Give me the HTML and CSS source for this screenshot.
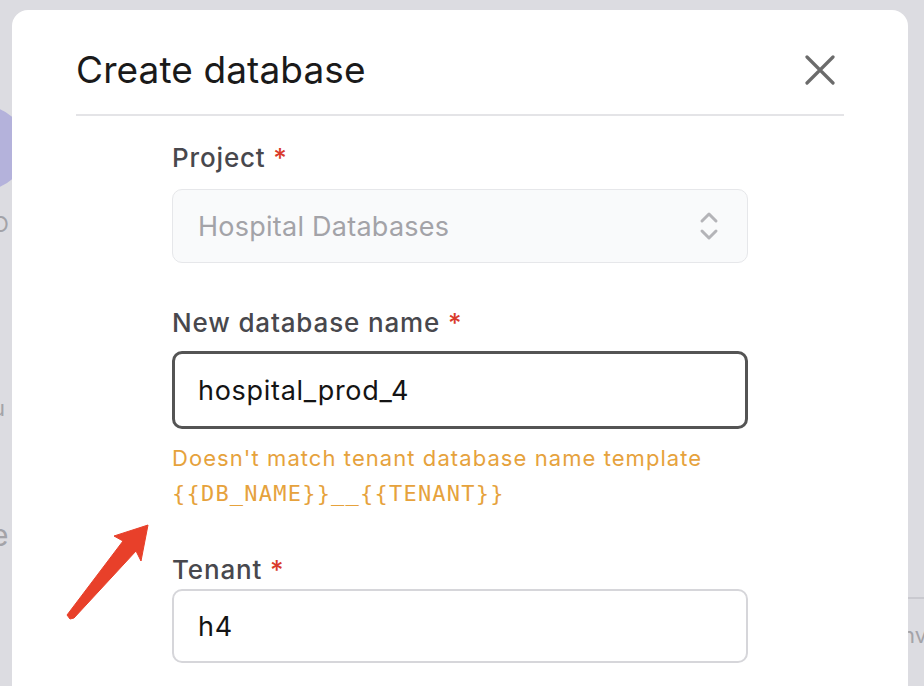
FILE: index.html
```html
<!DOCTYPE html>
<html lang="en">
<head>
<meta charset="utf-8">
<title>Create database</title>
<link rel="stylesheet" href="styles.css">
</head>
<body>
<div class="page">
  <div class="page-left">
    <div class="avatar"></div>
    <span class="frag frag-o">O</span>
    <span class="frag frag-u">u</span>
    <span class="frag frag-e">e</span>
  </div>
  <div class="page-right">
    <div class="rule"></div>
    <span class="frag frag-nv">nv</span>
  </div>
</div>

<div class="overlay">
  <div class="modal">
    <div class="modal-header">
      <h1 class="modal-title">Create database</h1>
      <button class="close-btn" aria-label="Close">
        <svg width="30" height="30" viewBox="0 0 30 30"><path d="M2 2 L28 28 M28 2 L2 28" stroke="#6b6b6b" stroke-width="3.2" stroke-linecap="round" fill="none"/></svg>
      </button>
    </div>
    <form class="form">
      <div class="field field-project">
        <label class="label">Project <span class="req">*</span></label>
        <div class="select">
          <span class="select-value">Hospital Databases</span>
          <svg class="chevrons" width="20" height="30" viewBox="0 0 20 30"><path d="M3 10 L10 3 L17 10 M3 20 L10 27 L17 20" stroke="#b4b4b8" stroke-width="3" stroke-linecap="round" stroke-linejoin="round" fill="none"/></svg>
        </div>
      </div>
      <div class="field field-name">
        <label class="label">New database name <span class="req">*</span></label>
        <div class="input input-focus">hospital_prod_4</div>
        <div class="hint">
          <div class="hint-text">Doesn't match tenant database name template</div>
          <div class="hint-code">{{DB_NAME}}__{{TENANT}}</div>
        </div>
      </div>
      <div class="field field-tenant">
        <label class="label">Tenant <span class="req">*</span></label>
        <div class="input">h4</div>
      </div>
    </form>
  </div>
  <svg class="arrow" width="100" height="110" viewBox="60 515 100 110">
    <polygon points="148,525 141,561 136,551 74,618 70,619 67,615 123,541 114,536" fill="#e8402a" stroke="#e8402a" stroke-width="1" stroke-linejoin="round"/>
  </svg>
</div>
</body>
</html>
```
FILE: styles.css
```css
* { box-sizing: border-box; }
html, body { margin: 0; padding: 0; }
body {
  width: 924px;
  height: 686px;
  overflow: hidden;
  background: #dcdce1;
  font-family: "Inter", "Liberation Sans", sans-serif;
  position: relative;
}
.page {
  display: flex;
  justify-content: space-between;
  height: 686px;
}
.page-left {
  width: 12px;
  position: relative;
  overflow: hidden;
}
.avatar {
  width: 84px;
  height: 84px;
  border-radius: 50%;
  background: #b4b2db;
  margin-top: 106px;
  margin-left: -58px;
}
.frag {
  display: block;
  color: #a3a3a8;
  font-size: 22px;
  line-height: 24px;
}
.frag-o { margin-top: 22px; margin-left: -8px; }
.frag-u { margin-top: 160px; margin-left: -8px; }
.frag-e { margin-top: 100px; margin-left: -9px; font-size: 30px; line-height: 30px; }
.page-right {
  width: 16px;
  overflow: hidden;
}
.rule {
  margin-top: 597px;
  height: 2px;
  background: #c9c9cf;
}
.frag-nv { margin-top: 24px; margin-left: -6px; font-size: 22px; }

.overlay {
  position: absolute;
  inset: 0;
}
.modal {
  margin: 10px 0 0 12px;
  width: 896px;
  height: 700px;
  background: #ffffff;
  border-radius: 16px;
  padding: 0 64px;
}
.modal-header {
  display: flex;
  align-items: center;
  justify-content: space-between;
  padding: 36px 0 20px 0;
  border-bottom: 2px solid #e4e4e7;
}
.modal-title {
  margin: 0;
  font-size: 37px;
  line-height: 46px;
  font-weight: 400;
  color: #1a1a1a;
  letter-spacing: 0.1px;
}
.close-btn {
  width: 48px;
  height: 48px;
  border: 0;
  background: none;
  padding: 0;
  display: flex;
  align-items: center;
  justify-content: center;
  cursor: pointer;
}
.form {
  width: 576px;
  margin: 0 auto;
}
.label {
  display: block;
  font-size: 26px;
  line-height: 32px;
  font-weight: 500;
  color: #48484d;
  letter-spacing: 0.85px;
}
.req { color: #d93a2b; }
.field-project { padding-top: 26px; }
.field-project .label { margin-bottom: 15px; }
.select {
  height: 74px;
  border: 1.5px solid #e6e7ea;
  border-radius: 10px;
  background: #f9fafb;
  display: flex;
  align-items: center;
  justify-content: space-between;
  padding: 0 28px 0 25px;
}
.select-value {
  font-size: 27px;
  color: #a3a3a8;
  letter-spacing: 0.25px;
}
.field-name { margin-top: 44px; }
.field-name .label { margin-bottom: 12px; }
.input {
  height: 74px;
  border: 2px solid #d6d6da;
  border-radius: 10px;
  background: #fff;
  display: flex;
  align-items: center;
  padding: 0 24px;
  font-size: 27px;
  color: #141414;
  letter-spacing: 0.7px;
}
.input-focus {
  height: 78px;
  border: 3px solid #545454;
  padding: 0 23px;
}
.hint {
  margin-top: 12px;
  color: #e6a23c;
  line-height: 35px;
}
.hint-text { font-size: 22px; letter-spacing: 1.07px; }
.hint-code {
  font-family: "DejaVu Sans Mono", "Liberation Mono", monospace;
  font-size: 22px;
  letter-spacing: 1.22px;
}
.field-tenant { margin-top: 43px; }
.field-tenant .label { margin-bottom: 3px; }
.arrow {
  position: absolute;
  left: 60px;
  top: 515px;
}
```
